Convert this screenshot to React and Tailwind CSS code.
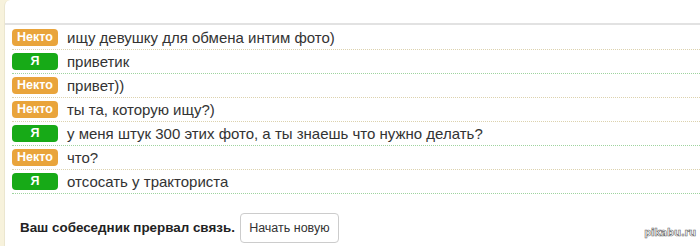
import React from "react";

const rows = [
  { me: false, text: "ищу девушку для обмена интим фото)" },
  { me: true, text: "приветик" },
  { me: false, text: "привет))" },
  { me: false, text: "ты та, которую ищу?)" },
  { me: true, text: "у меня штук 300 этих фото, а ты знаешь что нужно делать?" },
  { me: false, text: "что?" },
  { me: true, text: "отсосать у тракториста" },
];

export default function App() {
  return (
    <div className="w-[700px] h-[246px] overflow-hidden bg-[#f7f2dc] flex" style={{ fontFamily: "'Liberation Sans', Arial, sans-serif" }}>
      <div className="w-[4px] shrink-0" />
      <div className="flex-1 bg-white rounded-tl-[6px] border-l border-[#ebe6cf] flex flex-col relative">
        <div className="h-[23px]" />
        <div className="h-[2px] bg-[#e2e2e2]" />
        <div className="flex flex-col pl-[7px] pt-[1px]">
          {rows.map((r, i) => (
            <div
              key={i}
              className={
                "h-[24px] flex items-center border-b border-dotted " +
                (r.me ? "border-[#9fd49f]" : "border-[#dcd2ae]")
              }
            >
              <div
                className={
                  "w-[46px] h-[17px] rounded-[4px] flex items-center justify-center text-white font-bold text-[12.5px] leading-none " +
                  (r.me ? "bg-[#17aa17]" : "bg-[#e9a43b]")
                }
              >
                {r.me ? "Я" : "Некто"}
              </div>
              <div className="ml-[9px] text-[15px] text-[#333] leading-none">{r.text}</div>
            </div>
          ))}
        </div>
        <div className="flex items-center mt-[19px] pl-[15px]">
          <div className="font-bold text-[13.4px] text-[#222]">Ваш собеседник прервал связь.</div>
          <div className="ml-[5px] w-[99px] h-[30px] border border-[#cccccc] rounded-[4px] flex items-center justify-center text-[12.5px] text-[#333]">
            Начать новую
          </div>
        </div>
        <div className="absolute right-[4px] bottom-[6px] text-[10px] font-bold text-white tracking-tight [-webkit-text-stroke:0.6px_#666]" style={{ fontFamily: "'DejaVu Sans', sans-serif" }}>
          pikabu.ru
        </div>
      </div>
    </div>
  );
}
